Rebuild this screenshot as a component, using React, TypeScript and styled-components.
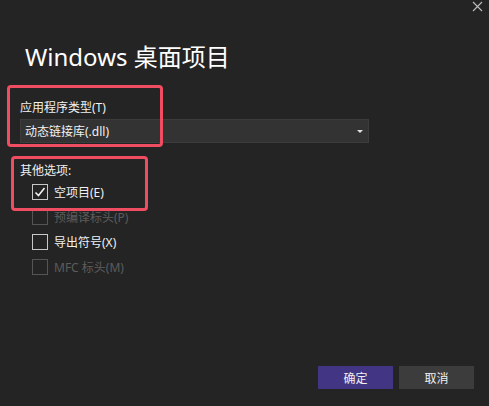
import React from 'react'
import styled, { createGlobalStyle } from 'styled-components'

const GlobalStyle = createGlobalStyle`
  html, body {
    margin: 0;
    padding: 0;
    background: #242424;
  }
  body {
    font-family: "Noto Sans", "Noto Sans CJK SC", sans-serif;
    color: #f1f1f1;
  }
`

const Dialog = styled.div`
  width: 489px;
  height: 406px;
  background: #242424;
  display: flex;
  flex-direction: column;
  box-sizing: border-box;
  overflow: hidden;
`

const TopBar = styled.div`
  height: 40px;
  display: flex;
  justify-content: flex-end;
  align-items: flex-start;
  padding: 1px 6px 0 0;
  box-sizing: border-box;
`

const CloseButton = styled.div`
  width: 11px;
  height: 11px;
  color: #bdbdbd;
  display: flex;
`

const Title = styled.h1`
  margin: 0;
  padding-left: 25px;
  font-size: 24px;
  font-weight: 400;
  line-height: 34px;
  color: #ffffff;
  font-family: "Noto Sans", "Noto Sans CJK SC", sans-serif;
`

const Body = styled.div`
  flex: 1;
  padding: 25px 0 0 20px;
  display: flex;
  flex-direction: column;
`

const Group = styled.div`
  position: relative;
`

const Highlight = styled.div<{ $w: number; $h: number; $l: number; $t: number }>`
  position: absolute;
  left: ${p => p.$l}px;
  top: ${p => p.$t}px;
  width: ${p => p.$w}px;
  height: ${p => p.$h}px;
  border: 3px solid #f04d62;
  border-radius: 4px;
  box-sizing: border-box;
  pointer-events: none;
`

const Label = styled.div`
  font-size: 12px;
  line-height: 18px;
  color: #f1f1f1;
`

const Select = styled.div`
  margin-top: 2px;
  width: 349px;
  height: 24px;
  background: #333333;
  border: 1px solid #3c3c3c;
  box-sizing: border-box;
  display: flex;
  align-items: center;
  justify-content: space-between;
  padding: 0 5px 0 4px;
  font-size: 12px;
  color: #f1f1f1;
`

const Arrow = styled.div`
  width: 0;
  height: 0;
  border-left: 3px solid transparent;
  border-right: 3px solid transparent;
  border-top: 3px solid #e0e0e0;
  margin-top: 1px;
`

const Options = styled.div`
  margin-top: 19px;
  display: flex;
  flex-direction: column;
`

const CheckList = styled.div`
  margin-top: 3px;
  padding-left: 12px;
  display: flex;
  flex-direction: column;
  gap: 8px;
`

const Row = styled.div<{ $disabled?: boolean }>`
  display: flex;
  align-items: center;
  gap: 6px;
  height: 17px;
  font-size: 12px;
  color: ${p => (p.$disabled ? '#5c5c5c' : '#f1f1f1')};
`

const Box = styled.div<{ $disabled?: boolean }>`
  width: 16px;
  height: 16px;
  box-sizing: border-box;
  border: 1px solid ${p => (p.$disabled ? '#555555' : '#c8c8c8')};
  display: flex;
  align-items: center;
  justify-content: center;
`

const Footer = styled.div`
  display: flex;
  justify-content: flex-end;
  gap: 6px;
  padding: 0 15px 17px 0;
`

const Button = styled.div<{ $primary?: boolean }>`
  width: 75px;
  height: 23px;
  display: flex;
  align-items: center;
  justify-content: center;
  font-size: 12px;
  color: #f1f1f1;
  background: ${p => (p.$primary ? '#413584' : '#3c3c3c')};
`

const Check = () => (
  <svg width="12" height="12" viewBox="0 0 12 12">
    <polyline points="1.5,6.5 4.5,9.5 10.5,2" fill="none" stroke="#f1f1f1" strokeWidth="1.6" />
  </svg>
)

const CheckItem: React.FC<{ label: string; checked?: boolean; disabled?: boolean }> = ({
  label,
  checked,
  disabled,
}) => (
  <Row $disabled={disabled}>
    <Box $disabled={disabled}>{checked && <Check />}</Box>
    <span>{label}</span>
  </Row>
)

export default function App() {
  return (
    <>
      <GlobalStyle />
      <Dialog>
        <TopBar>
          <CloseButton>
            <svg width="11" height="11" viewBox="0 0 11 11">
              <path d="M1 1 L10 10 M10 1 L1 10" stroke="currentColor" strokeWidth="1.1" />
            </svg>
          </CloseButton>
        </TopBar>
        <Title>Windows 桌面项目</Title>
        <Body>
          <Group>
            <Label>应用程序类型(T)</Label>
            <Select>
              <span>动态链接库(.dll)</span>
              <Arrow />
            </Select>
            <Highlight $l={-13} $t={-14} $w={156} $h={62} />
          </Group>
          <Options>
            <Group>
              <Label>其他选项:</Label>
              <Highlight $l={-9} $t={-6} $w={137} $h={55} />
            </Group>
            <CheckList>
              <CheckItem label="空项目(E)" checked />
              <CheckItem label="预编译标头(P)" disabled />
              <CheckItem label="导出符号(X)" />
              <CheckItem label="MFC 标头(M)" disabled />
            </CheckList>
          </Options>
        </Body>
        <Footer>
          <Button $primary>确定</Button>
          <Button>取消</Button>
        </Footer>
      </Dialog>
    </>
  )
}
